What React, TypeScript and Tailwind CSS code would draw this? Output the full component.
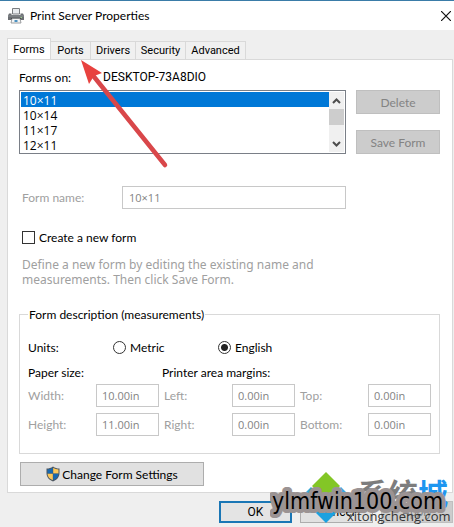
import { useState } from 'react'
import { clsx } from 'clsx'

const tabs = [
  { label: 'Forms', width: 'w-[44px]' },
  { label: 'Ports', width: 'w-[40px]' },
  { label: 'Drivers', width: 'w-[45px]' },
  { label: 'Security', width: 'w-[50px]' },
  { label: 'Advanced', width: 'w-[60px]' },
]

const forms = ['10×11', '10×14', '11×17', '12×11']

const measurements = [
  [
    { label: 'Width:', value: '10.00in' },
    { label: 'Left:', value: '0.00in' },
    { label: 'Top:', value: '0.00in' },
  ],
  [
    { label: 'Height:', value: '11.00in' },
    { label: 'Right:', value: '0.00in' },
    { label: 'Bottom:', value: '0.00in' },
  ],
]

function PrinterIcon() {
  return (
    <svg width="16" height="16" viewBox="0 0 16 16" aria-hidden="true">
      <path d="M4.500.500h7V6h-7z" fill="#e9ecef" stroke="#7a7d80" />
      <path d="M1 5.500h2.500V7h9V5.500H15l1 2v4.500H0v-4.500z" fill="#6b6e72" />
      <path d="M0 7.500h16v1H0z" fill="#8d9094" />
      <path d="M12.500 9h1.500v1h-1.500z" fill="#9ad08a" />
      <path d="M3 10h10v1H3z" fill="#33363a" />
      <path d="M4 10.500h8L13 15H3z" fill="#f4f5f6" stroke="#86898c" strokeWidth=".8" />
      <path d="M6.500 12h3v2h-3z" fill="#4a90c0" />
    </svg>
  )
}

function ShieldIcon() {
  return (
    <svg width="14" height="16" viewBox="0 0 14 16" aria-hidden="true">
      <path d="M7 .5C5 2 3 2.500.5 2.500V7c0 4 2.500 7 6.500 8.500C11 14 13.500 11 13.500 7V2.500C11 2.500 9 2 7 .5z" fill="#4d5660" />
      <path d="M6.800 1.800C5 3 3.500 3.400 1.500 3.500V7.500h5.300z" fill="#1768b0" />
      <path d="M7.200 1.800C9 3 10.500 3.400 12.500 3.500V7.500H7.200z" fill="#fcc85a" />
      <path d="M1.500 7.800h5.300v6.500C3.500 13 1.600 10.800 1.500 7.800z" fill="#fcc85a" />
      <path d="M12.500 7.800H7.200v6.500c3.300-1.300 5.200-3.500 5.300-6.500z" fill="#1768b0" />
    </svg>
  )
}

function ScrollBar() {
  return (
    <div className="flex w-[15px] flex-col justify-between bg-[#f0f0f0]" aria-hidden="true">
      <svg width="15" height="33" viewBox="0 0 15 33">
        <path d="M4 11l3.500-3.500L11 11" fill="none" stroke="#4d4d4d" strokeWidth="2" />
        <path d="M0 17h15v16H0z" fill="#cdcdcd" />
      </svg>
      <svg width="15" height="16" viewBox="0 0 15 16">
        <path d="M4 6l3.500 3.500L11 6" fill="none" stroke="#4d4d4d" strokeWidth="2" />
      </svg>
    </div>
  )
}

function Arrow() {
  return (
    <svg className="pointer-events-none absolute top-[58px] left-[78px]" width="92" height="114" viewBox="0 0 92 114" aria-hidden="true">
      <path d="M13 14l74 92" stroke="#d9474a" strokeWidth="4.500" strokeLinecap="round" />
      <path d="M3 1l21 13-8 3-5 8z" fill="#e8423f" />
    </svg>
  )
}

function Radio({ label, checked, onChange }: { label: string; checked: boolean; onChange: () => void }) {
  return (
    <label className="flex items-center gap-1">
      <input
        type="radio"
        name="units"
        checked={checked}
        onChange={onChange}
        className="size-[13px] appearance-none rounded-full border border-[#333] bg-white checked:bg-[radial-gradient(circle,#222_3px,white_4px)]"
      />
      {label}
    </label>
  )
}

function Watermark() {
  return (
    <svg className="pointer-events-none absolute right-0 bottom-0" width="184" height="60" viewBox="0 0 184 60">
      <path d="M56 5l14 14-14 14-14-14z" fill="#83c626" />
      <path d="M41 20l13 13-13 13-13-13zM71 20l13 13-13 13-13-13z" fill="#35a8e0" />
      <path d="M56 28l14 14-14 14-14-14z" fill="#1ba1e0" />
      <text x="88" y="38" fontSize="30" fontFamily="'Noto Sans CJK SC', sans-serif" fontWeight="700" fill="#7d7d7d">
        系统<tspan fill="#1e96f0">城</tspan>
      </text>
      <text
        x="2" y="42" fontSize="23" fontFamily="'DejaVu Sans Condensed', 'Liberation Sans', sans-serif"
        fill="#000" stroke="#9b9393" strokeWidth="8" strokeLinejoin="round" paintOrder="stroke"
      >
        ylmfwin100.com
      </text>
      <text x="77" y="54" fontSize="13" fontFamily="'Open Sans', sans-serif" fill="#333">xitongcheng.com</text>
    </svg>
  )
}

export default function App() {
  const [tab, setTab] = useState('Forms')
  const [form, setForm] = useState('10×11')
  const [units, setUnits] = useState('English')
  const [create, setCreate] = useState(false)

  return (
    <div className="relative flex min-h-screen flex-col overflow-hidden border-t border-[#3a7ca8] bg-[#efefef] font-['Lato',sans-serif] text-[12px] leading-[15px] text-black">
      <header className="flex h-[29px] items-center gap-[6px] bg-white pr-px pl-2">
        <PrinterIcon />
        <h1 className="flex-1">Print Server Properties</h1>
        <button aria-label="Close" className="p-[2px]">
          <svg width="10" height="10" viewBox="0 0 10 10">
            <path d="M0 0l10 10M10 0L0 10" stroke="#111" strokeWidth="1.200" />
          </svg>
        </button>
      </header>

      <main className="flex flex-col pt-2 pr-[1px] pl-[7px]">
        <div role="tablist" className="flex h-[21px] items-end">
          {tabs.map(({ label, width }) => (
            <button
              key={label}
              role="tab"
              aria-selected={tab === label}
              onClick={() => setTab(label)}
              className={clsx(
                "border-t border-r border-[#d9d9d9] text-center font-['Roboto',sans-serif] text-[11px]",
                width,
                tab === label ? 'h-[21px] border-l bg-white' : 'h-[18px] bg-[#f0f0f0]',
              )}
            >
              {label}
            </button>
          ))}
        </div>

        <section className="border border-[#d9d9d9] bg-white pt-[10px] pr-[12px] pb-[6px] pl-[11px]">
          <div className="flex gap-8">
            <span>Forms on:</span>
            <span className="font-['Roboto',sans-serif]">DESKTOP-73A8DIO</span>
          </div>

          <div className="mt-[5px] flex gap-[10px]">
            <div className="flex h-[64px] flex-1 border border-[#7a7f87] p-px">
              <select
                size={4}
                aria-label="Forms"
                value={form}
                onChange={e => setForm(e.target.value)}
                className="flex-1 appearance-none overflow-hidden bg-white font-['Open_Sans',sans-serif] outline-none"
              >
                {forms.map(f => (
                  <option key={f} value={f} className="h-[15px] min-h-0 px-[2px] py-0 leading-[15px] checked:bg-[#0078d7] checked:bg-linear-to-r checked:from-[#0078d7] checked:to-[#0078d7] checked:text-white">
                    {f}
                  </option>
                ))}
              </select>
              <ScrollBar />
            </div>
            <div className="flex w-[84px] flex-col justify-between">
              <button disabled className="h-[24px] border border-[#bfbfbf] bg-[#cccccc] text-[#838383]">Delete</button>
              <button disabled className="h-[24px] border border-[#bfbfbf] bg-[#cccccc] text-[#838383]">Save Form</button>
            </div>
          </div>

          <div className="mt-8 mr-[94px] flex items-center pl-[3px]">
            <label htmlFor="form-name" className="w-[100px] text-[#a0a0a0]">Form name:</label>
            <input id="form-name" disabled value={form} className="h-[23px] min-w-0 flex-1 border border-[#c8c8c8] px-[6px] font-['Open_Sans',sans-serif] text-[11px] text-[#838383]" />
          </div>

          <label className="mt-[21px] flex items-center gap-1 pl-[3px]">
            <input
              type="checkbox"
              checked={create}
              onChange={e => setCreate(e.target.checked)}
              className="size-[13px] appearance-none border border-[#333] bg-white checked:bg-[#333]"
            />
            Create a new form
          </label>

          <p className="mt-3 max-w-[310px] pl-[3px] font-['Noto_Sans',sans-serif] text-[#a0a0a0]">
            Define a new form by editing the existing name and measurements. Then click Save Form.
          </p>

          <fieldset className="mt-5 border border-[#d9d9d9] px-2 pb-[17px]">
            <legend className="px-px">Form description (measurements)</legend>
            <div className="mt-[18px] flex">
              <span className="w-[85px]">Units:</span>
              <div className="w-[105px]">
                <Radio label="Metric" checked={units === 'Metric'} onChange={() => setUnits('Metric')} />
              </div>
              <Radio label="English" checked={units === 'English'} onChange={() => setUnits('English')} />
            </div>
            <div className="mt-[10px] flex">
              <span className="w-[134px]">Paper size:</span>
              <span>Printer area margins:</span>
            </div>
            <div className="mt-1 flex flex-col gap-[6px]">
              {measurements.map((row, i) => (
                <div key={i} className="flex gap-[5px]">
                  {row.map(({ label, value }) => (
                    <label key={label} className="flex flex-1 items-center justify-between text-[#a0a0a0]">
                      {label}
                      <input disabled value={value} className="h-[23px] w-[63px] border border-[#c8c8c8] px-[5px] font-['Open_Sans',sans-serif] text-[11px] text-[#838383]" />
                    </label>
                  ))}
                </div>
              ))}
            </div>
          </fieldset>

          <button className="mt-2 ml-px flex h-[24px] w-[184px] items-center justify-center gap-[2px] border border-[#adadad] bg-[#e1e1e1]">
            <ShieldIcon />
            Change Form Settings
          </button>
        </section>
      </main>

      <footer className="mt-2 flex justify-end gap-2 pr-[1px]">
        <button className="h-[22px] w-[73px] border-2 border-[#1a76b5] bg-[#e4e4e4] font-['Roboto',sans-serif]">OK</button>
        <button className="h-[22px] w-[73px] border border-[#adadad] bg-[#e1e1e1] font-['Roboto',sans-serif]">Cancel</button>
        <button disabled className="h-[22px] w-[72px] border border-[#bfbfbf] bg-[#cccccc] font-['Roboto',sans-serif] text-[#838383]">Apply</button>
      </footer>

      <Arrow />
      <Watermark />
    </div>
  )
}
